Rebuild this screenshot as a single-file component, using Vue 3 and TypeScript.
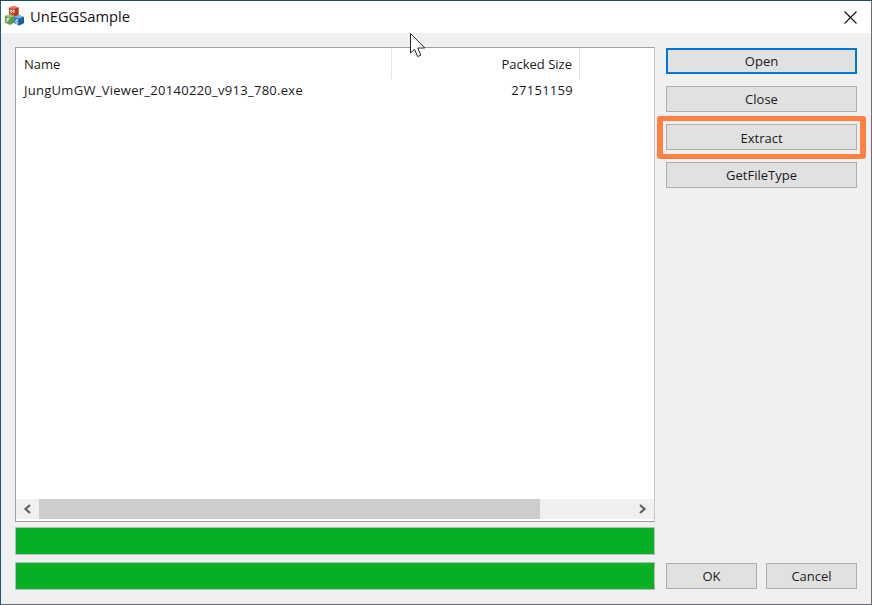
<script setup lang="ts">
const topButtons: string[] = ['Open', 'Close', 'Extract', 'GetFileType']
</script>

<template>
  <div class="window">
    <header class="titlebar">
      <svg class="app-icon" width="20" height="20" viewBox="0 0 20 20">
        <path d="M4 1.5 L9 0 L13.5 1.5 L13.5 9 L9 11 L4 9 Z" fill="#d4502f" />
        <path d="M4 1.5 L9 0 L13.5 1.5 L9 3 Z" fill="#e8836a" />
        <path d="M9 3 L13.5 1.5 L13.5 9 L9 11 Z" fill="#b63a20" />
        <path d="M0 10 L5 8.5 L9.5 10 L9.5 16.5 L5 19 L0 16.5 Z" fill="#5c9c4a" />
        <path d="M0 10 L5 8.5 L9.5 10 L5 11.5 Z" fill="#9cc678" />
        <path d="M9 11 L14 9 L19 11 L19 17 L14 19.5 L9 17 Z" fill="#2f7fc4" />
        <path d="M9 11 L14 9 L19 11 L14 12.5 Z" fill="#7db5e4" />
        <path d="M14 12.5 L19 11 L19 17 L14 19.5 Z" fill="#1c5f9e" />
        <path d="M6 7 V4 L7.5 5.5 L9 4 V7" stroke="#fff" stroke-width="0.9" fill="none" />
        <path d="M2 16 V12.5 H4.5 M2 14 H4" stroke="#fff" stroke-width="0.9" fill="none" />
        <path d="M13 14 H11 V17 H13" stroke="#fff" stroke-width="0.9" fill="none" />
      </svg>
      <span class="title">UnEGGSample</span>
      <svg class="close-x" width="13" height="13" viewBox="0 0 13 13">
        <path d="M0.5 0.5 L12.5 12.5 M12.5 0.5 L0.5 12.5" stroke="#111" stroke-width="1.1" fill="none" />
      </svg>
    </header>

    <main class="client">
      <section class="left">
        <div class="list">
          <div class="list-head">
            <div class="col-name">Name</div>
            <div class="col-size">Packed Size</div>
          </div>
          <div class="list-row">
            <div class="col-name">JungUmGW_Viewer_20140220_v913_780.exe</div>
            <div class="col-size">27151159</div>
          </div>
          <div class="list-fill"></div>
          <div class="scrollbar">
            <span class="arrow">
              <svg width="9" height="10" viewBox="0 0 9 10"><path d="M7 1 L2.5 5 L7 9" stroke="#606060" stroke-width="2.2" fill="none" /></svg>
            </span>
            <div class="track"><div class="thumb"></div></div>
            <span class="arrow">
              <svg width="9" height="10" viewBox="0 0 9 10"><path d="M2 1 L6.5 5 L2 9" stroke="#606060" stroke-width="2.2" fill="none" /></svg>
            </span>
          </div>
        </div>
        <div class="progress"></div>
        <div class="progress second"></div>
      </section>

      <aside class="right">
        <div class="top-buttons">
          <button
            v-for="label in topButtons"
            :key="label"
            class="btn"
            :class="{ focused: label === 'Open', marked: label === 'Extract' }"
          >{{ label }}</button>
        </div>
        <div class="bottom-buttons">
          <button class="btn">OK</button>
          <button class="btn">Cancel</button>
        </div>
      </aside>
    </main>

    <svg class="cursor" width="16" height="25" viewBox="0 0 16 25">
      <path d="M0.5 0.5 V20 L4.6 16.4 L7.6 23.5 L10.8 22.2 L7.8 15 H14.8 Z" fill="#fff" stroke="#222" stroke-width="1" />
    </svg>
  </div>
</template>

<style scoped>
.window {
  position: relative;
  width: 872px;
  height: 605px;
  box-sizing: border-box;
  border-top: 1px solid #1d4a60;
  border-left: 1px solid #155a80;
  border-right: 1px solid #6e6e6e;
  border-bottom: 1px solid #5f6a72;
  background: #f0f0f0;
  display: flex;
  flex-direction: column;
  font-family: "Open Sans", "Noto Sans", sans-serif;
  font-size: 13px;
  color: #1a1a1a;
  overflow: hidden;
}
.titlebar {
  height: 32px;
  box-sizing: border-box;
  padding: 0 14px 2px 4px;
  flex: none;
  background: #fff;
  display: flex;
  align-items: center;
}
.app-icon {
  flex: none;
}
.title {
  margin-left: 5px;
  font-size: 14.7px;
  color: #111;
  flex: 1;
}
.close-x {
  margin-top: 2px;
}
.client {
  flex: 1;
  display: flex;
  padding: 14px 14px 12px 14px;
  gap: 11px;
  min-height: 0;
}
.left {
  width: 640px;
  flex: none;
  display: flex;
  flex-direction: column;
}
.list {
  height: 475px;
  box-sizing: border-box;
  flex: none;
  background: #fff;
  border: 1px solid #a0a0a0;
  border-right-color: #c8c8c8;
  border-bottom-color: #9a9ea4;
  display: flex;
  flex-direction: column;
}
.list-head,
.list-row {
  display: flex;
  flex: none;
}
.list-head {
  height: 31px;
}
.list-row {
  height: 21px;
  align-items: center;
  letter-spacing: 0.28px;
}
.col-name {
  width: 376px;
  box-sizing: border-box;
  padding-left: 8px;
  white-space: nowrap;
}
.col-size {
  width: 188px;
  box-sizing: border-box;
  padding-right: 7px;
  text-align: right;
  white-space: nowrap;
}
.list-head .col-name,
.list-head .col-size {
  height: 31px;
  line-height: 33px;
  border-right: 1px solid #e6e6e6;
}
.list-fill {
  flex: 1;
}
.scrollbar {
  height: 20px;
  flex: none;
  margin-bottom: 2px;
  background: #f0f0f0;
  display: flex;
  align-items: stretch;
}
.arrow {
  width: 23px;
  flex: none;
  display: flex;
  align-items: center;
  justify-content: center;
}
.track {
  flex: 1;
  display: flex;
}
.thumb {
  width: 501px;
  background: #cdcdcd;
}
.progress {
  height: 28px;
  flex: none;
  margin-top: 5px;
  box-sizing: border-box;
  background: #06b025;
  border: 1px solid #bcbcbc;
}
.progress.second {
  margin-top: 7px;
}
.right {
  flex: 1;
  display: flex;
  flex-direction: column;
  justify-content: space-between;
}
.top-buttons {
  padding-top: 1px;
  display: flex;
  flex-direction: column;
  gap: 12px;
}
.bottom-buttons {
  display: flex;
  justify-content: space-between;
  margin-bottom: 3px;
}
.bottom-buttons .btn {
  width: 91px;
}
.btn {
  position: relative;
  width: 191px;
  height: 26px;
  box-sizing: border-box;
  background: #e1e1e1;
  border: 1px solid #adadad;
  border-radius: 0;
  padding: 0;
  font: inherit;
  color: #1a1a1a;
  text-align: center;
}
.btn.focused {
  border: 2px solid #0078d7;
}
.btn.marked {
  padding-top: 1px;
}
.btn.marked::after {
  content: "";
  position: absolute;
  top: -9px;
  bottom: -10px;
  left: -10px;
  right: -10px;
  border: solid #ff8040;
  border-width: 5px 6px;
  border-radius: 3px;
}
.cursor {
  position: absolute;
  left: 409px;
  top: 32px;
}
</style>
